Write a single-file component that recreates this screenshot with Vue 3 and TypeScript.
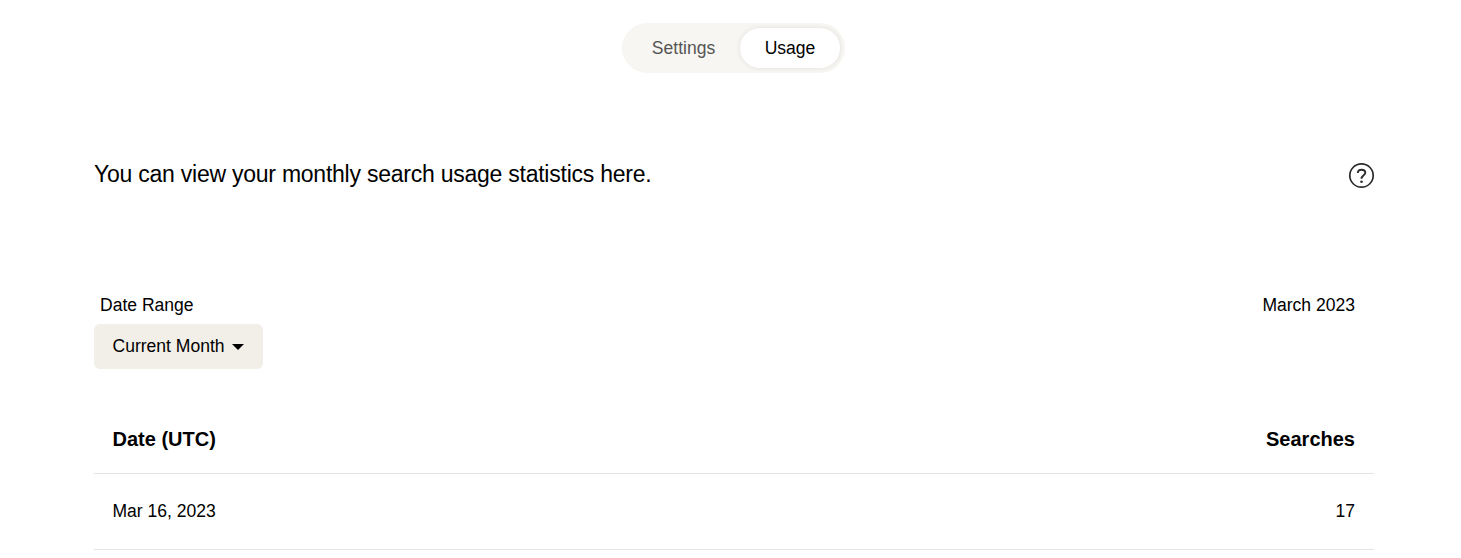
<script setup lang="ts">
import { ref } from 'vue'
const tabs = ['Settings', 'Usage']
const active = ref('Usage')
const rows = [{ date: 'Mar 16, 2023', searches: 17 }]
</script>

<template>
  <main class="page">
    <nav class="tabs">
      <button v-for="tab in tabs" :key="tab" class="tab" :class="{ active: tab === active }" @click="active = tab">{{ tab }}</button>
    </nav>
    <section class="intro">
      <p>You can view your monthly search usage statistics here.</p>
      <svg class="help" width="26" height="26" viewBox="0 0 26 26" fill="none" stroke="#2b2b2b" stroke-width="1.7">
        <circle cx="13.5" cy="12.5" r="11.7" />
        <path stroke-width="1.9" d="M9.8 10.1C9.8 7.9 11.2 6.7 13.5 6.7S17.3 8 17.3 9.8C17.3 12.2 13.5 12.4 13.5 15.7" />
        <circle cx="13.5" cy="18.8" r="1.3" fill="#2b2b2b" stroke="none" />
      </svg>
    </section>
    <section class="range">
      <div>
        <div class="label">Date Range</div>
        <button class="select">Current Month
          <svg width="12" height="6" viewBox="0 0 12 6"><path d="M0 0H12L6 6Z" /></svg>
        </button>
      </div>
      <div class="month">March 2023</div>
    </section>
    <table>
      <thead><tr><th>Date (UTC)</th><th>Searches</th></tr></thead>
      <tbody><tr v-for="row in rows" :key="row.date"><td>{{ row.date }}</td><td>{{ row.searches }}</td></tr></tbody>
    </table>
  </main>
</template>

<style>
body { margin: 0; background: #fff; overflow: hidden; }
</style>
<style scoped>
.page { box-sizing: border-box; width: 1280px; height: 558px; margin-left: 94px; padding-top: 23px; font: 17.55px/24px "Liberation Sans", Arial, sans-serif; color: #000; }
button { font: inherit; border: 0; margin: 0; color: inherit; white-space: nowrap; }
.tabs { display: flex; box-sizing: border-box; width: 223px; height: 50px; margin-left: 528px; padding: 5px; border-radius: 25px; background: #f7f6f2; }
.tab { flex: none; height: 40px; width: 113px; padding: 0; border-radius: 20px; background: transparent; color: #555; }
.tab.active { width: 100px; background: #fff; color: #000; box-shadow: 0 0 5px rgba(0, 0, 0, .1); }
.intro { display: flex; justify-content: space-between; margin-top: 85px; height: 32px; }
.intro p { margin: 0; font-size: 23px; line-height: 32px; letter-spacing: -.24px; }
.help { flex: none; margin-top: 5px; overflow: visible; }
.range { display: flex; justify-content: space-between; margin-top: 103px; height: 76px; }
.label { margin-left: 6px; height: 31px; }
.select { display: flex; align-items: center; gap: 7px; width: 169px; height: 45px; padding: 0 18px 2px 18.5px; background: #f2efe8; border-radius: 6px; }
.select svg { flex: none; position: relative; top: 1px; }
.month { margin-right: 19px; }
table { width: 100%; margin-top: 35px; border-collapse: separate; border-spacing: 0; }
th, td { box-sizing: border-box; height: 76px; padding: 0 19px 2px 18.5px; text-align: left; border-bottom: 1px solid #e5e5e5; }
th { height: 70px; padding-bottom: 0; font-size: 20px; }
th:last-child, td:last-child { text-align: right; }
</style>
